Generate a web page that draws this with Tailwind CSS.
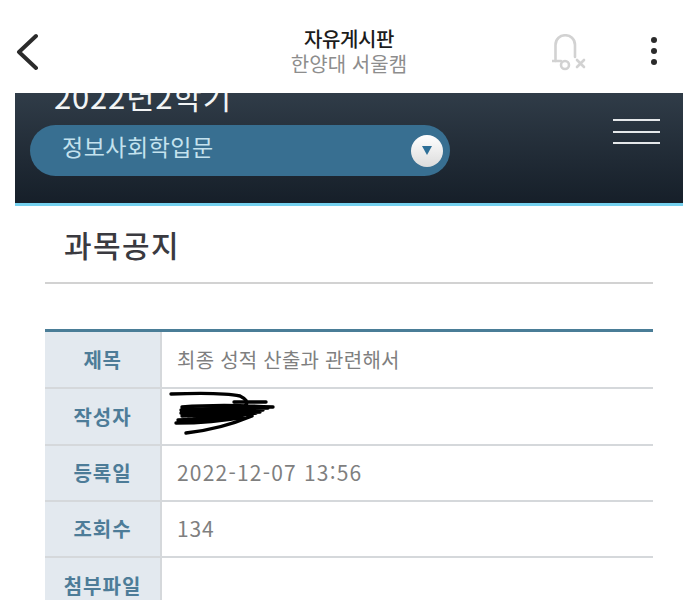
<!DOCTYPE html>
<html lang="ko">
<head>
    <meta charset="UTF-8">
    <meta name="viewport" content="width=device-width, initial-scale=1.0">
    <title>자유게시판</title>
    <script src="https://cdn.jsdelivr.net/npm/@tailwindcss/browser@4"></script>
</head>
<body class="w-[698px] h-[600px] overflow-hidden bg-white font-['Noto_Sans_CJK_KR','Liberation_Sans',sans-serif]">
    <!-- App bar -->
    <header class="h-[93px] pt-[27px] pl-[16px] pr-[41px] flex items-start">
        <svg class="w-[22px] h-[38px] mt-[6px] shrink-0" viewBox="0 0 22 38" fill="none" stroke="#2b2b2b" stroke-width="4" stroke-linecap="round" stroke-linejoin="round">
            <path d="M20 3 L3 19 L20 35"/>
        </svg>
        <div class="w-[130px] ml-[246px] flex flex-col items-center shrink-0">
            <span class="text-[20px] leading-[24px] font-medium tracking-[-0.4px] text-[#1c1c1c] whitespace-nowrap">자유게시판</span>
            <span class="text-[20px] leading-[26px] tracking-[0.1px] text-[#8d8d8d] whitespace-nowrap">한양대 서울캠</span>
        </div>
        <div class="flex items-start gap-[65px] ml-auto">
            <svg class="w-[34px] h-[38px] mt-[7px]" viewBox="0 0 34 38" fill="none" stroke="#d2d2d2" stroke-width="2.6" stroke-linecap="round">
                <path d="M3.5 27 V11 C3.5 -2 23 -2 23 11 V23"/>
                <path d="M0.5 27 H9"/>
                <circle cx="13" cy="31" r="4"/>
                <path d="M25 26 L32 33 M32 26 L25 33"/>
            </svg>
            <div class="w-[6px] mt-[10px] flex flex-col gap-[5px]">
                <div class="w-[6px] h-[6px] rounded-full bg-[#2b2b2b]"></div>
                <div class="w-[6px] h-[6px] rounded-full bg-[#2b2b2b]"></div>
                <div class="w-[6px] h-[6px] rounded-full bg-[#2b2b2b]"></div>
            </div>
        </div>
    </header>

    <!-- Course banner -->
    <section class="mx-[15px] w-[668px] h-[113px] overflow-hidden bg-gradient-to-b from-[#303c48] to-[#161f29] border-b-[3px] border-[#74d0ee] flex justify-between pl-[15px] pr-[23px]">
        <div class="w-[420px]">
            <div class="text-[31px] leading-[36px] -mt-[15px] pl-[24px] tracking-[0.8px] text-[#f2f4f5] whitespace-nowrap">2022년2학기</div>
            <div class="mt-[11px] h-[51px] rounded-full bg-[#386f91] flex items-center justify-between pl-[32px] pr-[7px]">
                <span class="text-[23px] pb-[8px] text-[#c4e2ee] tracking-[0.5px]">정보사회학입문</span>
                <div class="w-[32px] h-[32px] rounded-full bg-gradient-to-b from-white to-[#dcdcdc] flex items-center justify-center">
                    <svg class="w-[12px] h-[11px]" viewBox="0 0 12 11"><path d="M1 1 H11 L6 10 Z" fill="#2d6f97"/></svg>
                </div>
            </div>
        </div>
        <div class="w-[47px] mt-[26px] flex flex-col gap-[9.5px]">
            <div class="h-[2px] bg-[#e4e7e9]"></div>
            <div class="h-[2px] bg-[#e4e7e9]"></div>
            <div class="h-[2px] bg-[#e4e7e9]"></div>
        </div>
    </section>

    <main class="relative pl-[45px] w-[698px]">
        <h2 class="w-[608px] h-[78px] pl-[19px] pt-[18px] border-b-2 border-[#d2d2d2] text-[30px] leading-[40px] font-medium tracking-[1.4px] text-[#3a3a40]">과목공지</h2>

        <div class="w-[608px] mt-[45px] border-t-[3px] border-[#4a7d97] text-[20px]">
            <div class="flex h-[57px] border-b-2 border-[#d5d8db]">
                <div class="w-[117px] shrink-0 bg-[#e3e9ef] border-r-2 border-[#d5d8db] flex items-center justify-center font-bold tracking-[0.6px] text-[#4d7c98]">제목</div>
                <div class="pl-[15px] flex items-center text-[#7f7f7f] tracking-[0.25px]">최종 성적 산출과 관련해서</div>
            </div>
            <div class="flex h-[57px] border-b-2 border-[#d5d8db]">
                <div class="w-[117px] shrink-0 bg-[#e3e9ef] border-r-2 border-[#d5d8db] flex items-center justify-center font-bold tracking-[1px] text-[#4d7c98]">작성자</div>
                <div class="pl-[15px]"></div>
            </div>
            <div class="flex h-[56px] border-b-2 border-[#d5d8db]">
                <div class="w-[117px] shrink-0 bg-[#e3e9ef] border-r-2 border-[#d5d8db] flex items-center justify-center font-bold tracking-[1px] text-[#4d7c98]">등록일</div>
                <div class="pl-[15px] flex items-center text-[21px] text-[#7f7f7f] tracking-[1.2px]">2022-12-07 13:56</div>
            </div>
            <div class="flex h-[56px] border-b-2 border-[#d5d8db]">
                <div class="w-[117px] shrink-0 bg-[#e3e9ef] border-r-2 border-[#d5d8db] flex items-center justify-center font-bold tracking-[1px] text-[#4d7c98]">조회수</div>
                <div class="pl-[15px] flex items-center text-[21px] text-[#7f7f7f] tracking-[0.8px]">134</div>
            </div>
            <div class="flex h-[56px]">
                <div class="w-[117px] shrink-0 bg-[#e3e9ef] border-r-2 border-[#d5d8db] flex items-center justify-center font-bold tracking-[1px] text-[#4d7c98]">첨부파일</div>
                <div class="pl-[15px]"></div>
            </div>
        </div>

        <!-- scribble over the author name -->
        <svg class="absolute left-[168px] top-[185px] w-[110px] h-[48px]" viewBox="0 0 110 48" fill="none" stroke="#000" stroke-linecap="round" stroke-linejoin="round">
            <path stroke-width="3.4" d="M3 3 C30 2 58 2 72 5 C78 8 80 11 78 14 M66 11 L98 11 M14 16 C40 14 70 14 105 16 M13 19 L100 17 M13 22 C40 20 70 20 95 19 M14 25 L92 21 M10 29 C35 28 60 27 88 22 M8 32 C30 32 55 30 76 26 M18 42 C45 39 65 33 84 25"/>
            <path stroke-width="5" d="M20 19 L84 18 M20 24 L78 22 M26 29 L72 25"/>
        </svg>
    </main>
</body>
</html>
